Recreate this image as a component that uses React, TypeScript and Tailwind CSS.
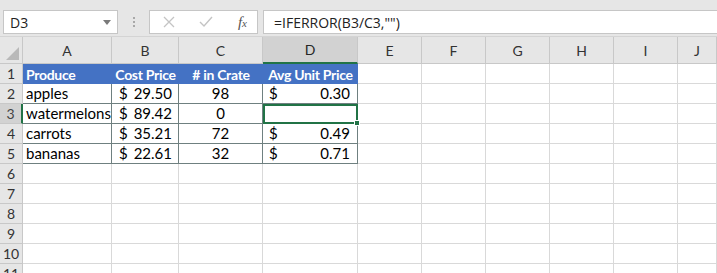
import React from 'react';

type Col = { key: string; w: string };

const cols: Col[] = [
  { key: 'A', w: 'w-[89px]' },
  { key: 'B', w: 'w-[67px]' },
  { key: 'C', w: 'w-[84px]' },
  { key: 'D', w: 'w-[95px]' },
  { key: 'E', w: 'w-[64px]' },
  { key: 'F', w: 'w-[64px]' },
  { key: 'G', w: 'w-[64px]' },
  { key: 'H', w: 'w-[64px]' },
  { key: 'I', w: 'w-[64px]' },
  { key: 'J', w: 'w-[39px]' },
];

type Item = { name: string; cost: string; count: string; avg: string };

const items: Item[] = [
  { name: 'apples', cost: '29.50', count: '98', avg: '0.30' },
  { name: 'watermelons', cost: '89.42', count: '0', avg: '' },
  { name: 'carrots', cost: '35.21', count: '72', avg: '0.49' },
  { name: 'bananas', cost: '22.61', count: '32', avg: '0.71' },
];

const headers = ['Produce', 'Cost Price', '# in Crate', 'Avg Unit Price'];

const Toolbar = () => (
  <div className="h-[37px] bg-[#e6e6e6] flex items-start pt-[10px] border-b border-[#d4d4d4] font-['Open_Sans',sans-serif]">
    {/* name box */}
    <div className="ml-[3px] w-[115px] h-[24px] bg-white border border-[#c6c6c6] flex items-center justify-between pl-[6px] pr-[6px] text-[14px] text-[#222]">
      <span>D3</span>
      <svg width="8" height="5" viewBox="0 0 8 5">
        <path d="M0 0 L8 0 L4 5 Z" fill="#7a7a7a" />
      </svg>
    </div>
    <div className="w-[31px] h-[24px] flex flex-col items-center justify-center gap-[2px]">
      <span className="w-[2px] h-[2px] bg-[#a8a8a8]" />
      <span className="w-[2px] h-[2px] bg-[#a8a8a8]" />
      <span className="w-[2px] h-[2px] bg-[#a8a8a8]" />
    </div>
    {/* cancel / enter / fx */}
    <div className="w-[109px] h-[24px] bg-white border border-[#c6c6c6] flex items-center justify-between pl-[13px] pr-[10px]">
      <svg width="12" height="12" viewBox="0 0 12 12">
        <path d="M1 1 L11 11 M11 1 L1 11" stroke="#c4c4c4" strokeWidth="1.3" />
      </svg>
      <svg width="14" height="12" viewBox="0 0 14 12">
        <path d="M1 6 L5 10 L13 1" stroke="#c4c4c4" strokeWidth="1.4" fill="none" />
      </svg>
      <span className="font-['Liberation_Serif',serif] italic text-[15px] text-[#555] leading-none">
        f<span className="text-[11px]">x</span>
      </span>
    </div>
    <div className="ml-[5px] flex-1 h-[24px] bg-white border border-[#c6c6c6] border-r-0 flex items-center pl-[10px] text-[14px] text-[#222]">
      =IFERROR(B3/C3,"")
    </div>
  </div>
);

const HeaderRow = () => (
  <div className="flex h-[27px]">
    <div className="w-[23px] shrink-0 bg-[#e6e6e6] border-r border-b border-[#c8c8c8] flex items-end justify-end p-[3px]">
      <svg width="13" height="13" viewBox="0 0 13 13">
        <path d="M13 0 L13 13 L0 13 Z" fill="#b9b9b9" />
      </svg>
    </div>
    {cols.map((c) =>
      c.key === 'D' ? (
        <div
          key={c.key}
          className={`${c.w} shrink-0 bg-[#d2d2d2] border-r border-[#c8c8c8] border-b-2 border-b-[#217346] flex items-center justify-center text-[14px] text-[#262626]`}
        >
          {c.key}
        </div>
      ) : (
        <div
          key={c.key}
          className={`${c.w} shrink-0 bg-[#e6e6e6] border-r border-b border-[#c8c8c8] flex items-center justify-center text-[14px] text-[#333]`}
        >
          {c.key}
        </div>
      )
    )}
  </div>
);

const Dollar = ({ value }: { value: string }) => (
  <div className="flex justify-between w-full">
    <span>$</span>
    <span>{value}</span>
  </div>
);

const DataRow = ({ n }: { n: number }) => {
  const isHeader = n === 1;
  const item = n >= 2 && n <= 5 ? items[n - 2] : null;
  const selected = n === 3;

  return (
    <div className="flex h-[20px]">
      {selected ? (
        <div className="w-[23px] shrink-0 bg-[#d2d2d2] border-r-2 border-r-[#217346] border-b border-b-[#c8c8c8] flex items-center justify-center text-[14px] text-[#444]">
          {n}
        </div>
      ) : (
        <div className="w-[23px] shrink-0 bg-[#e6e6e6] border-r border-b border-[#c8c8c8] flex items-center justify-center text-[14px] text-[#333]">
          {n}
        </div>
      )}
      {cols.map((c, i) => {
        if (isHeader && i < 4) {
          return (
            <div
              key={c.key}
              className={`${c.w} shrink-0 bg-[#4472c4] text-white font-bold whitespace-nowrap overflow-hidden flex items-center text-[14px] tracking-[-0.3px] ${
                i === 0 ? 'justify-start pl-[3px]' : 'justify-center'
              }`}
            >
              {headers[i]}
            </div>
          );
        }
        if (item && i < 4) {
          if (i === 3 && selected) {
            return (
              <div key={c.key} className={`${c.w} shrink-0 relative border-2 border-[#217346]`}>
                <span className="absolute -right-[4px] -bottom-[4px] w-[6px] h-[6px] bg-[#217346] border border-white" />
              </div>
            );
          }
          return (
            <div
              key={c.key}
              className={`${c.w} shrink-0 border-r border-b border-[#6f8080] flex items-center text-[15px] text-black whitespace-nowrap ${
                i === 0 ? 'pl-[3px]' : i === 1 ? 'pl-[7px] pr-[6px]' : i === 2 ? 'justify-center' : 'pl-[6px] pr-[7px]'
              }`}
            >
              {i === 0 && item.name}
              {i === 1 && <Dollar value={item.cost} />}
              {i === 2 && item.count}
              {i === 3 && <Dollar value={item.avg} />}
            </div>
          );
        }
        return <div key={c.key} className={`${c.w} shrink-0 border-r border-b border-[#d9d9d9]`} />;
      })}
    </div>
  );
};

export default function App() {
  const rows = [1, 2, 3, 4, 5, 6, 7, 8, 9, 10, 11];
  return (
    <div className="w-[717px] h-[273px] overflow-hidden bg-white font-['Lato',sans-serif]">
      <Toolbar />
      <HeaderRow />
      {rows.map((n) => (
        <DataRow key={n} n={n} />
      ))}
    </div>
  );
}
